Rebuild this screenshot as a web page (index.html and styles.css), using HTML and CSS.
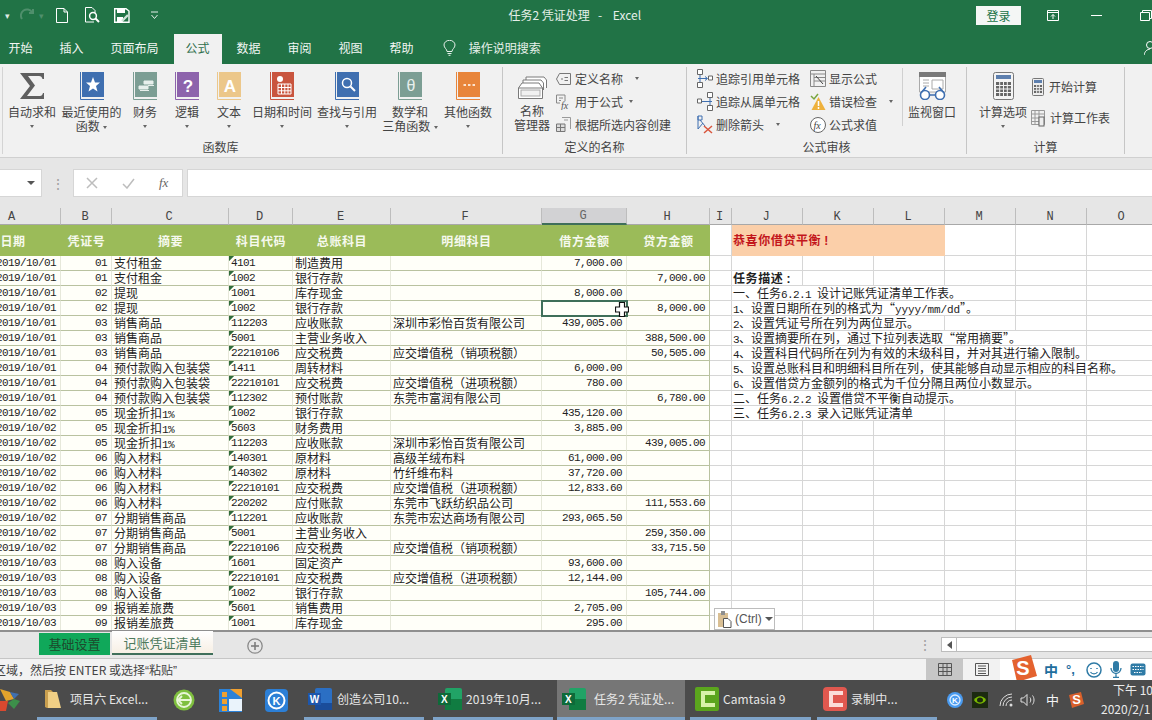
FILE: index.html
```html
<!DOCTYPE html>
<html lang="zh">
<head>
<meta charset="utf-8">
<title>任务2 凭证处理 - Excel</title>
<link rel="stylesheet" href="styles.css">
</head>
<body>
<div class="app">
<header class="titlebar">
  <div class="qat">
    <span class="caret-w first">▾</span>
    <svg class="q redo" width="16" height="14" viewBox="0 0 16 14"><path d="M2 11A6 6 0 0 1 12 4M13 1V5H9" fill="none" stroke="#4f8f6c" stroke-width="2"/></svg>
    <span class="caret-w dim">▾</span>
    <svg class="q doc" width="12" height="15" viewBox="0 0 12 15"><path d="M.5.5H8L11.5 4V14.5H.5Z M8 .5V4H11.5" fill="none" stroke="#fff"/></svg>
    <svg class="q prev" width="15" height="16" viewBox="0 0 15 16"><path d="M.5.5H7L10 3.5V6M.5.5V15H9" fill="none" stroke="#fff"/><circle cx="8" cy="9" r="3.4" fill="none" stroke="#fff" stroke-width="1.5"/><path d="M10.5 11.5L14 15" stroke="#fff" stroke-width="2"/></svg>
    <svg class="q save" width="16" height="15" viewBox="0 0 16 15"><path d="M.7.7H12L15 3V14.3H.7Z" fill="none" stroke="#fff" stroke-width="1.4"/><rect x="3" y="1" width="8" height="4" fill="#fff"/><rect x="3" y="9" width="6" height="5" fill="#fff"/><path d="M8 13L14 7" stroke="#cfe3d8" stroke-width="2.4"/></svg>
    <svg class="q more" width="9" height="9" viewBox="0 0 9 9"><path d="M1 1H8M1.5 4L4.5 7.5L7.5 4" fill="none" stroke="#e5efe9"/></svg>
  </div>
  <div class="doc-title">任务2&nbsp;凭证处理&nbsp;&nbsp; - &nbsp;&nbsp;&nbsp;Excel</div>
  <button class="login">登录</button>
  <svg class="win w1" width="12" height="11" viewBox="0 0 12 11"><path d="M.5.5H11.5V10.5H.5ZM.5 2.5H11.5M6 9V4.5M4 6.5L6 4.5L8 6.5" fill="none" stroke="#fff"/></svg>
  <span class="win-min"></span>
  <svg class="win w3" width="12" height="11" viewBox="0 0 12 11"><path d="M.5 2.5H9.5V10.5H.5ZM2.500 2.500V.5H11.500V8.500H9.500" fill="none" stroke="#fff"/></svg>
</header>

<nav class="tabs">
  <span class="tab">开始</span><span class="tab">插入</span><span class="tab">页面布局</span><span class="tab on">公式</span><span class="tab">数据</span><span class="tab">审阅</span><span class="tab">视图</span><span class="tab">帮助</span>
  <svg class="bulb" width="13" height="16" viewBox="0 0 13 16"><path d="M4 11.5C4 9 1 8 1 5A5.5 4.7 0 0 1 12 5C12 8 9 9 9 11.5ZM4.5 13.5H8.5M5.5 15.3H7.5" fill="none" stroke="#e6f0ea"/></svg>
  <span class="search">操作说明搜索</span>
  <svg class="share" width="8" height="16" viewBox="0 0 8 16"><circle cx="6" cy="5" r="3.500" fill="none" stroke="#fff"/><path d="M0 15C1 11 3 9.500 6 9" fill="none" stroke="#fff"/></svg>
</nav>

<section class="ribbon">
  <div class="group g1">
    <div class="body">
      <div class="big w54"><svg class="ic" width="24" height="28" viewBox="0 0 24 28"><path d="M0 1H24V7H22.5C22 5 21 4 19 4H8L15 13.5L7 24H20C21.500 24 22.500 23 23 21H24V27H0L10 14Z" fill="#5f5f5f"/></svg><span class="lb">自动求和</span><i class="car"></i></div>
      <div class="big w62"><svg class="ic" width="24" height="28" viewBox="0 0 24 28"><path d="M.5 0V27.5H24" stroke="#3f6fb0" fill="none"/><rect x="2" width="22" height="25" fill="#3f6fb0"/><path d="M13 5L15 10.500L20 10.500L16 14L17.500 19.500L13 16.500L8.500 19.500L10 14L6 10.500L11 10.500Z" fill="#fff"/></svg><span class="lb">最近使用的</span><span class="lb">函数 <i class="car in"></i></span></div>
      <div class="big w42 l"><svg class="ic" width="24" height="28" viewBox="0 0 24 28"><path d="M.5 0V27.5H24" stroke="#7c9e94" fill="none"/><rect x="2" width="22" height="25" fill="#7c9e94"/><path d="M6 14H15V17H6ZM7 18.500H16M11 9H20V12H11ZM15 13.500H21" stroke="#e7efec" fill="#e7efec"/></svg><span class="lb">财务</span><i class="car"></i></div>
      <div class="big w42"><svg class="ic" width="24" height="28" viewBox="0 0 24 28"><path d="M.5 0V27.500H24" stroke="#8d63ac" fill="none"/><rect x="2" width="22" height="25" fill="#8d63ac"/><text x="13" y="20" class="gl" fill="#fff">?</text></svg><span class="lb">逻辑</span><i class="car"></i></div>
      <div class="big w42"><svg class="ic" width="24" height="28" viewBox="0 0 24 28"><path d="M.5 0V27.500H24" stroke="#ecc78a" fill="none"/><rect x="2" width="22" height="25" fill="#ecc78a"/><text x="13" y="20" class="gl" fill="#fff">A</text></svg><span class="lb">文本</span><i class="car"></i></div>
      <div class="big w64"><svg class="ic" width="24" height="28" viewBox="0 0 24 28"><path d="M.5 0V27.500H24" stroke="#c9553e" fill="none"/><rect x="2" width="22" height="25" fill="#c9553e"/><circle cx="10" cy="7" r="3" fill="#fff"/><path d="M8 12H21V22H8ZM8 15.500H21M8 18.800H21M11.500 12V22M14.800 12V22M18 12V22" fill="#c9553e" stroke="#fff"/></svg><span class="lb">日期和时间</span><i class="car"></i></div>
      <div class="big w66"><svg class="ic" width="24" height="28" viewBox="0 0 24 28"><path d="M.5 0V27.500H24" stroke="#3f6fb0" fill="none"/><rect x="2" width="22" height="25" fill="#3f6fb0"/><circle cx="12" cy="11" r="4.500" fill="none" stroke="#fff" stroke-width="1.500"/><path d="M15.500 14.500L20 19" stroke="#fff" stroke-width="2"/></svg><span class="lb">查找与引用</span><i class="car"></i></div>
      <div class="big w60"><svg class="ic" width="24" height="28" viewBox="0 0 24 28"><path d="M.5 0V27.500H24" stroke="#7c9e94" fill="none"/><rect x="2" width="22" height="25" fill="#7c9e94"/><text x="13" y="19" class="gl th" fill="#e7efec">θ</text></svg><span class="lb">数学和</span><span class="lb">三角函数 <i class="car in"></i></span></div>
      <div class="big w56"><svg class="ic" width="24" height="28" viewBox="0 0 24 28"><path d="M.5 0V27.500H24" stroke="#e8853a" fill="none"/><rect x="2" width="22" height="25" fill="#e8853a"/><path d="M7.500 13H10M12 13H14.500M16.500 13H19" stroke="#fbe3cf" stroke-width="2"/></svg><span class="lb">其他函数</span><i class="car"></i></div>
    </div>
    <div class="gt t1">函数库</div>
  </div>

  <div class="group g2">
    <div class="body">
      <div class="big name"><svg class="ic" width="29" height="23" viewBox="0 0 29 23"><path d="M8 4V1H26L28.500 4V12M5 7V4H23L25.500 7V14M.5 12L4 7H21L24.500 12V22.500H.5ZM.5 12H24.500" fill="#fff" stroke="#7a7a7a"/><rect x="3" y="14" width="19" height="6" fill="#f1f1f1" stroke="#aaa"/></svg><span class="lb">名称</span><span class="lb">管理器</span></div>
      <div class="col names">
        <div class="sm"><svg width="15" height="12" viewBox="0 0 15 12"><path d="M3.500.5H14.500V11.500H3.500L.5 6Z M5 6H7M8.500 4.500H12M8.500 7.500H12" fill="none" stroke="#777"/></svg><span>定义名称</span><i class="car gap12"></i></div>
        <div class="sm"><svg width="15" height="16" viewBox="0 0 15 16"><path d="M.5 1H9V7M.5 1V9H4M3 4H7M3 6.500H5" fill="none" stroke="#888"/><text x="5" y="15" class="fx" fill="#555">fx</text></svg><span>用于公式</span><i class="car gap4"></i></div>
        <div class="sm"><svg width="15" height="15" viewBox="0 0 15 15"><path d="M.5 7H9V14.500H.5Z M.5 10.500H9M4.500 7V14.500" fill="#ddd" stroke="#777"/><path d="M6 .5H14.500V12" fill="none" stroke="#999"/><path d="M8 3H12" stroke="#999"/></svg><span>根据所选内容创建</span></div>
      </div>
    </div>
    <div class="gt">定义的名称</div>
  </div>

  <div class="group g3">
    <div class="body">
      <div class="col audit1">
        <div class="sm"><svg width="16" height="19" viewBox="0 0 16 19"><path d="M.5.5H5.500V5.500H.5ZM.5 13.500H5.500V18.500H.5ZM11.500 7H15.500V11H11.500Z" fill="#fff" stroke="#666"/><path d="M3 6V13M1 9.500H10M8 7.500L10.500 9.500L8 11.500" fill="none" stroke="#3f6fb0"/></svg><span>追踪引用单元格</span></div>
        <div class="sm"><svg width="16" height="19" viewBox="0 0 16 19"><path d="M10.500.5H15.500V5.500H10.500ZM10.500 13.500H15.500V18.500H10.500ZM.5 7H4.500V11H.5Z" fill="#fff" stroke="#666"/><path d="M13 6V13M5 9.500H15" fill="none" stroke="#3f6fb0"/></svg><span>追踪从属单元格</span></div>
        <div class="sm"><svg width="16" height="19" viewBox="0 0 16 19"><path d="M1 1V14M1 1H5V5H1ZM3 5L8 11M1 14L6 8" fill="none" stroke="#3f6fb0"/><path d="M7 11L15 18M15 11L7 18" stroke="#d9553c" stroke-width="1.500"/></svg><span>删除箭头</span><i class="car gap12"></i></div>
      </div>
      <div class="col audit2">
        <div class="sm"><svg width="16" height="17" viewBox="0 0 16 17"><path d="M.5.5H15.500V16.500H.5ZM.5 4H15.500M4 4V16.500M4 7.500H15.500M4 11H15.500" fill="none" stroke="#888"/><path d="M6 6L13 14" stroke="#444"/></svg><span>显示公式</span></div>
        <div class="sm"><svg width="16" height="18" viewBox="0 0 16 18"><path d="M1 3L4 6L8 1" fill="none" stroke="#7aa63f" stroke-width="1.500"/><path d="M8.500 4L15.500 17H1.500Z" fill="#eeb13c"/><path d="M8.500 8V13M8.500 14V16" stroke="#fff" stroke-width="1.500"/></svg><span>错误检查</span><i class="car gap12"></i></div>
        <div class="sm"><svg width="16" height="16" viewBox="0 0 16 16"><circle cx="8" cy="8" r="7.500" fill="#fff" stroke="#666"/><text x="3.500" y="11.500" class="fx" fill="#444">fx</text></svg><span>公式求值</span></div>
      </div>
      <div class="vsep"></div>
      <div class="big watch"><svg class="ic" width="29" height="28" viewBox="0 0 29 28"><path d="M1.500 1H27.500V20H1.500Z" fill="#fff" stroke="#aaa"/><rect x="1" y="0" width="27" height="5" fill="#7a7a7a"/><path d="M5 8H11M5 11H11M5 14H11M14 8H25V17H14Z" fill="none" stroke="#aaa"/><circle cx="7" cy="23" r="4.500" fill="#fff" stroke="#3f6fb0" stroke-width="1.600"/><circle cx="22" cy="23" r="4.500" fill="#fff" stroke="#3f6fb0" stroke-width="1.600"/><path d="M11 23H18M3 21L8 15M26 21L21 15" stroke="#3f6fb0" stroke-width="1.600" fill="none"/></svg><span class="lb">监视窗口</span></div>
    </div>
    <div class="gt">公式审核</div>
  </div>

  <div class="group g4">
    <div class="body">
      <div class="big calc"><svg class="ic" width="21" height="28" viewBox="0 0 21 28"><rect x=".5" y=".5" width="20" height="27" rx="2" fill="#f4f4f4" stroke="#777"/><rect x="3" y="3" width="15" height="4" fill="#5d7fae"/><path d="M3 10H18V24H3Z" fill="#666"/><path d="M3 13.500H18M3 17H18M3 20.500H18M6.700 10V24M10.500 10V24M14.300 10V24" stroke="#f4f4f4"/></svg><span class="lb">计算选项</span><i class="car"></i></div>
      <div class="col calcs">
        <div class="sm"><svg width="12" height="18" viewBox="0 0 12 18"><rect x=".5" y=".5" width="11" height="17" rx="1" fill="#eee" stroke="#777"/><rect x="2" y="2" width="8" height="3" fill="#5d7fae"/><path d="M2 7H10V15H2Z" fill="#666"/><path d="M2 9.500H10M2 12.300H10M4.700 7V15M7.300 7V15" stroke="#eee"/></svg><span>开始计算</span></div>
        <div class="sm"><svg width="14" height="18" viewBox="0 0 14 18"><path d="M.5 1.500H13.500V15.500H.5ZM.5 5H13.500M.5 9H13.500M.5 12.500H13.500M4 1.500V15.500M8 1.500V15.500" fill="none" stroke="#999"/><rect x="8" y="8" width="5" height="9" fill="#eee" stroke="#666"/></svg><span>计算工作表</span></div>
      </div>
    </div>
    <div class="gt">计算</div>
  </div>
</section>

<div class="gap-strip"></div>
<div class="fbar">
  <div class="namebox"><i class="car dark"></i></div>
  <span class="dots">⋮</span>
  <div class="fbtns">
    <svg class="x" width="12" height="12" viewBox="0 0 12 12"><path d="M1 1L11 11M11 1L1 11" stroke="#bdbdbd" stroke-width="1.500"/></svg>
    <svg class="v" width="13" height="11" viewBox="0 0 13 11"><path d="M1 6L5 10L12 1" fill="none" stroke="#bdbdbd" stroke-width="1.500"/></svg>
    <span class="fxb">fx</span>
  </div>
  <div class="finput"></div>
</div>
<div class="gap-strip"></div>

<main class="sheet">
<table class="grid">
<colgroup><col class="ca"><col class="cb"><col class="cc"><col class="cd"><col class="ce"><col class="cf"><col class="cg"><col class="ch"><col class="ci"><col class="cj"><col class="cj"><col class="cj"><col class="cj"><col class="cj"><col class="cj"></colgroup>
<thead>
<tr class="letters"><th>A</th><th>B</th><th>C</th><th>D</th><th>E</th><th>F</th><th class="sel">G</th><th>H</th><th>I</th><th>J</th><th>K</th><th>L</th><th>M</th><th>N</th><th>O</th></tr>
</thead>
<tbody>
<tr class="head"><td>日期</td><td>凭证号</td><td>摘要</td><td>科目代码</td><td>总账科目</td><td>明细科目</td><td>借方金额</td><td>贷方金额</td><td></td><td colspan="3" class="congrats">恭喜你借贷平衡<span class="bang">!</span></td><td></td><td></td><td></td></tr>
<tr><td>2019/10/01</td><td>01</td><td>支付租金</td><td>4101</td><td>制造费用</td><td></td><td>7,000.00</td><td></td><td></td><td></td><td></td><td></td><td></td><td></td><td></td></tr>
<tr><td>2019/10/01</td><td>01</td><td>支付租金</td><td>1002</td><td>银行存款</td><td></td><td></td><td>7,000.00</td><td></td><td class="b">任务描述<span class="bang">:</span></td><td></td><td></td><td></td><td></td><td></td></tr>
<tr><td>2019/10/01</td><td>02</td><td>提现</td><td>1001</td><td>库存现金</td><td></td><td>8,000.00</td><td></td><td></td><td colspan="4">一、任务<span class="n">6.2.1&nbsp;</span>设计记账凭证清单工作表。</td><td></td><td></td></tr>
<tr><td>2019/10/01</td><td>02</td><td>提现</td><td>1002</td><td>银行存款</td><td></td><td class="selected"></td><td>8,000.00</td><td></td><td colspan="4"><span class="n">1</span>、设置日期所在列的格式为“<span class="n wide">yyyy/mm/dd</span>”。</td><td></td><td></td></tr>
<tr><td>2019/10/01</td><td>03</td><td>销售商品</td><td>112203</td><td>应收账款</td><td>深圳市彩怡百货有限公司</td><td>439,005.00</td><td></td><td></td><td colspan="3"><span class="n">2</span>、设置凭证号所在列为两位显示。</td><td></td><td></td><td></td></tr>
<tr><td>2019/10/01</td><td>03</td><td>销售商品</td><td>5001</td><td>主营业务收入</td><td></td><td></td><td>388,500.00</td><td></td><td colspan="5"><span class="n">3</span>、设置摘要所在列，通过下拉列表选取“常用摘要”。</td><td></td></tr>
<tr><td>2019/10/01</td><td>03</td><td>销售商品</td><td>22210106</td><td>应交税费</td><td>应交增值税（销项税额）</td><td></td><td>50,505.00</td><td></td><td colspan="5"><span class="n">4</span>、设置科目代码所在列为有效的末级科目，并对其进行输入限制。</td><td></td></tr>
<tr><td>2019/10/01</td><td>04</td><td>预付款购入包装袋</td><td>1411</td><td>周转材料</td><td></td><td>6,000.00</td><td></td><td></td><td colspan="6"><span class="n">5</span>、设置总账科目和明细科目所在列，使其能够自动显示相应的科目名称。</td></tr>
<tr><td>2019/10/01</td><td>04</td><td>预付款购入包装袋</td><td>22210101</td><td>应交税费</td><td>应交增值税（进项税额）</td><td>780.00</td><td></td><td></td><td colspan="5"><span class="n">6</span>、设置借贷方金额列的格式为千位分隔且两位小数显示。</td><td></td></tr>
<tr><td>2019/10/01</td><td>04</td><td>预付款购入包装袋</td><td>112302</td><td>预付账款</td><td>东莞市富润有限公司</td><td></td><td>6,780.00</td><td></td><td colspan="4">二、任务<span class="n">6.2.2&nbsp;</span>设置借贷不平衡自动提示。</td><td></td><td></td></tr>
<tr><td>2019/10/02</td><td>05</td><td>现金折扣<span class="n">1%</span></td><td>1002</td><td>银行存款</td><td></td><td>435,120.00</td><td></td><td></td><td colspan="3">三、任务<span class="n">6.2.3&nbsp;</span>录入记账凭证清单</td><td></td><td></td><td></td></tr>
<tr><td>2019/10/02</td><td>05</td><td>现金折扣<span class="n">1%</span></td><td>5603</td><td>财务费用</td><td></td><td>3,885.00</td><td></td><td></td><td></td><td></td><td></td><td></td><td></td><td></td></tr>
<tr><td>2019/10/02</td><td>05</td><td>现金折扣<span class="n">1%</span></td><td>112203</td><td>应收账款</td><td>深圳市彩怡百货有限公司</td><td></td><td>439,005.00</td><td></td><td></td><td></td><td></td><td></td><td></td><td></td></tr>
<tr><td>2019/10/02</td><td>06</td><td>购入材料</td><td>140301</td><td>原材料</td><td>高级羊绒布料</td><td>61,000.00</td><td></td><td></td><td></td><td></td><td></td><td></td><td></td><td></td></tr>
<tr><td>2019/10/02</td><td>06</td><td>购入材料</td><td>140302</td><td>原材料</td><td>竹纤维布料</td><td>37,720.00</td><td></td><td></td><td></td><td></td><td></td><td></td><td></td><td></td></tr>
<tr><td>2019/10/02</td><td>06</td><td>购入材料</td><td>22210101</td><td>应交税费</td><td>应交增值税（进项税额）</td><td>12,833.60</td><td></td><td></td><td></td><td></td><td></td><td></td><td></td><td></td></tr>
<tr><td>2019/10/02</td><td>06</td><td>购入材料</td><td>220202</td><td>应付账款</td><td>东莞市飞跃纺织品公司</td><td></td><td>111,553.60</td><td></td><td></td><td></td><td></td><td></td><td></td><td></td></tr>
<tr><td>2019/10/02</td><td>07</td><td>分期销售商品</td><td>112201</td><td>应收账款</td><td>东莞市宏达商场有限公司</td><td>293,065.50</td><td></td><td></td><td></td><td></td><td></td><td></td><td></td><td></td></tr>
<tr><td>2019/10/02</td><td>07</td><td>分期销售商品</td><td>5001</td><td>主营业务收入</td><td></td><td></td><td>259,350.00</td><td></td><td></td><td></td><td></td><td></td><td></td><td></td></tr>
<tr><td>2019/10/02</td><td>07</td><td>分期销售商品</td><td>22210106</td><td>应交税费</td><td>应交增值税（销项税额）</td><td></td><td>33,715.50</td><td></td><td></td><td></td><td></td><td></td><td></td><td></td></tr>
<tr><td>2019/10/03</td><td>08</td><td>购入设备</td><td>1601</td><td>固定资产</td><td></td><td>93,600.00</td><td></td><td></td><td></td><td></td><td></td><td></td><td></td><td></td></tr>
<tr><td>2019/10/03</td><td>08</td><td>购入设备</td><td>22210101</td><td>应交税费</td><td>应交增值税（进项税额）</td><td>12,144.00</td><td></td><td></td><td></td><td></td><td></td><td></td><td></td><td></td></tr>
<tr><td>2019/10/03</td><td>08</td><td>购入设备</td><td>1002</td><td>银行存款</td><td></td><td></td><td>105,744.00</td><td></td><td></td><td></td><td></td><td></td><td></td><td></td></tr>
<tr><td>2019/10/03</td><td>09</td><td>报销差旅费</td><td>5601</td><td>销售费用</td><td></td><td>2,705.00</td><td></td><td></td><td></td><td></td><td></td><td></td><td></td><td></td></tr>
<tr><td>2019/10/03</td><td>09</td><td>报销差旅费</td><td>1001</td><td>库存现金</td><td></td><td>295.00</td><td></td><td></td><td></td><td></td><td></td><td></td><td></td><td></td></tr>
<tr><td></td><td></td><td></td><td></td><td></td><td></td><td></td><td></td><td></td><td></td><td></td><td></td><td></td><td></td><td></td></tr>
</tbody>
</table>
<svg class="cursor" width="14" height="15" viewBox="0 0 14 15"><path d="M4.500.5H9.500V5H13.500V10H9.500V14.500H4.500V10H.5V5H4.500Z" fill="#fff" stroke="#111" stroke-width="1.200"/></svg>
<div class="paste"><svg width="14" height="17" viewBox="0 0 14 17"><rect x="0" y="2" width="10" height="14" fill="#d9bf94"/><rect x="3" y="0" width="4" height="4" fill="#8f8f8f"/><path d="M5.500 7.500H10L13 10.500V16.500H5.500Z" fill="#fff" stroke="#555"/></svg><span>(Ctrl)</span><i class="car dark"></i></div>
</main>

<div class="sheetbar">
  <div class="stab green">基础设置</div>
  <div class="stab active">记账凭证清单</div>
  <svg class="plus" width="16" height="16" viewBox="0 0 16 16"><circle cx="8" cy="8" r="7.200" fill="none" stroke="#8a8a8a" stroke-width="1.300"/><path d="M8 4V12M4 8H12" stroke="#777" stroke-width="1.500"/></svg>
  <span class="dots sdots">⋮</span>
  <div class="scroll"><span class="sl"><i></i></span><span class="track"></span></div>
</div>

<footer class="status">
  <span class="msg">区域，然后按 ENTER 或选择<span class="lq">“</span>粘贴<span class="lq">”</span></span>
  <div class="view on"><svg width="14" height="13" viewBox="0 0 14 13"><path d="M.5.500H13.500V12.500H.5ZM.5 4.500H13.500M.5 8.500H13.500M5 .5V12.500M9 .5V12.500" fill="none" stroke="#555"/></svg></div>
  <div class="view"><svg width="14" height="13" viewBox="0 0 14 13"><path d="M.5.500H13.500V12.500H.5ZM3 3H11M3 5.500H11M3 8H11M3 10.500H11" fill="none" stroke="#555"/></svg></div>
  <div class="ime">
    <svg class="slogo" width="28" height="27" viewBox="0 0 28 27"><path d="M3 5L22 0L28 21L8 27Z" fill="#e4622f"/><text x="14" y="20" class="sg" fill="#fff">S</text></svg>
    <span class="zh">中</span><span class="pt">°,</span>
    <svg width="16" height="16" viewBox="0 0 16 16"><circle cx="8" cy="8" r="7" fill="none" stroke="#2f7ba6" stroke-width="1.500"/><path d="M5 6V7M11 6V7" stroke="#2f7ba6" stroke-width="1.500"/><path d="M4.500 10C6 12.500 10 12.500 11.500 10" fill="none" stroke="#2f7ba6" stroke-width="1.200"/></svg>
    <svg width="12" height="17" viewBox="0 0 12 17"><rect x="3" y="0" width="6" height="11" rx="3" fill="#2f7ba6"/><path d="M1 7A5 5.500 0 0 0 11 7M6 13V16M3 16.300H9" fill="none" stroke="#2f7ba6" stroke-width="1.300"/></svg>
    <svg width="16" height="13" viewBox="0 0 16 13"><rect x=".5" y=".5" width="15" height="12" rx="2" fill="#2f7ba6"/><path d="M2.500 3.500H13.500M2.500 6.500H13.500M4 9.500H12" stroke="#fff" stroke-dasharray="1.500 1"/></svg>
  </div>
</footer>

<div class="taskbar">
  <svg class="t-start" width="20" height="22" viewBox="0 0 20 22"><path d="M0 0L10 3L14 10L6 12Z" fill="#e2a32c"/><path d="M14 10L20 12L14 20L8 14Z" fill="#3d8f4a"/><path d="M0 12H8L6 22H0Z" fill="#d9492f"/><path d="M10 3L19 5L14 10Z" fill="#3f6fb0"/></svg>
  <div class="item explorer"><svg width="16" height="20" viewBox="0 0 16 20"><path d="M0 1H6L8 3V19H2L0 18Z" fill="#c99f4f"/><path d="M3 3H12L16 19H3Z" fill="#f0cf85"/></svg><span>项目六 Excel...</span></div>
  <div class="pin p1"><svg width="22" height="22" viewBox="0 0 22 22"><circle cx="11" cy="11" r="10.500" fill="#7fbf3f"/><circle cx="11" cy="11" r="7" fill="none" stroke="#e9f6d8" stroke-width="1.800"/><path d="M4 11H18M9 7L5 11L9 15" fill="none" stroke="#e9f6d8" stroke-width="1.800"/></svg></div>
  <div class="pin p2"><svg width="23" height="23" viewBox="0 0 23 23"><rect width="23" height="23" fill="#2c82d8"/><path d="M11 0L23 0V9ZM3 3H8V8H3ZM3 10H8V15H3ZM3 17H8V22H3Z" fill="#f0a030"/><rect x="10" y="10" width="13" height="12" fill="#eaf3fb"/></svg></div>
  <div class="pin p3"><svg width="23" height="23" viewBox="0 0 23 23"><rect width="23" height="23" rx="4" fill="#2c7fd6"/><circle cx="11.500" cy="11.500" r="8" fill="none" stroke="#fff" stroke-width="2"/><text x="11.500" y="15.500" class="kk" fill="#fff">K</text></svg></div>
  <div class="item word"><svg width="24" height="22" viewBox="0 0 24 22"><rect x="7" y="0" width="17" height="22" rx="2" fill="#2b6fc4"/><rect x="7" y="15" width="17" height="7" fill="#1a4d9a"/><rect x="0" y="5" width="13" height="12" fill="#1d56ac"/><text x="6.500" y="15" class="tx" fill="#fff">W</text></svg><span>创造公司10...</span></div>
  <div class="item excel"><svg width="24" height="22" viewBox="0 0 24 22"><rect x="7" y="0" width="17" height="22" rx="2" fill="#21a366"/><rect x="7" y="11" width="17" height="11" fill="#107c41"/><rect x="0" y="5" width="13" height="12" fill="#0e6a39"/><text x="6.500" y="15" class="tx" fill="#fff">X</text></svg><span>2019年10月...</span></div>
  <div class="item excel act"><svg width="24" height="22" viewBox="0 0 24 22"><rect x="7" y="0" width="17" height="22" rx="2" fill="#21a366"/><rect x="7" y="11" width="17" height="11" fill="#107c41"/><rect x="0" y="5" width="13" height="12" fill="#0e6a39"/><text x="6.500" y="15" class="tx" fill="#fff">X</text></svg><span>任务2 凭证处...</span></div>
  <div class="item cam"><svg width="24" height="24" viewBox="0 0 24 24"><rect width="24" height="24" rx="2" fill="#5ba51d"/><path d="M20 6H8V18H20" fill="none" stroke="#d7f2a8" stroke-width="4"/></svg><span>Camtasia 9</span></div>
  <div class="item rec"><svg width="24" height="24" viewBox="0 0 24 24"><rect width="24" height="24" rx="4" fill="#e0584f"/><path d="M20 6H8V18H20" fill="none" stroke="#fbdcd8" stroke-width="4"/></svg><span>录制中...</span></div>
  <div class="tray">
    <svg width="16" height="16" viewBox="0 0 16 16"><circle cx="8" cy="8" r="8" fill="#4a9bf0"/><circle cx="8" cy="8" r="5" fill="none" stroke="#dcecff" stroke-width="1.300"/><text x="8" y="11" class="kks" fill="#fff">K</text></svg>
    <svg class="nv" width="16" height="16" viewBox="0 0 16 16"><rect width="16" height="16" fill="#1c2a10"/><path d="M2 8C5 3 11 3 14 8C11 13 5 13 2 8Z" fill="#7ab800"/><ellipse cx="8" cy="8" rx="3" ry="2.500" fill="#1c2a10"/></svg>
    <svg class="wf" width="14" height="14" viewBox="0 0 14 14"><path d="M1 13A12 12 0 0 1 13 1M4 13A9 9 0 0 1 13 4M7 13A6 6 0 0 1 13 7" fill="none" stroke="#dcdcdc"/><circle cx="12" cy="12" r="1.500" fill="#dcdcdc"/></svg>
    <svg class="sp" width="16" height="14" viewBox="0 0 16 14"><path d="M1 5H3.500L7 1.500V12.500L3.500 9H1Z M10 4.500C11 6 11 8 10 9.500M12.500 2.500C14.500 5 14.500 9 12.500 11.500" fill="none" stroke="#e2e2e2"/></svg>
    <span class="tzh">中</span>
    <svg class="ts" width="16" height="16" viewBox="0 0 16 16"><path d="M1 3L13 0L16 12L4 16Z" fill="#d9602c"/><text x="8.500" y="12" class="sgs" fill="#fff">S</text></svg>
    <div class="clock"><span class="clk1">下午 10:</span><span class="clk2">2020/2/1</span></div>
  </div>
</div>
</div>
</body>
</html>
```
FILE: styles.css
```css
* { box-sizing: border-box; }
html, body { margin: 0; padding: 0; }
body { width: 1152px; height: 720px; overflow: hidden; font-family: "Noto Sans CJK SC", "Noto Sans", sans-serif; font-size: 12px; color: #444; }
svg { display: block; flex: none; }
i { font-style: normal; }
.app { width: 1152px; height: 720px; display: flex; flex-direction: column; overflow: hidden; background: #e6e6e6; }

/* title bar */
.titlebar { height: 32px; background: #217346; display: flex; align-items: center; padding-bottom: 2px; color: #fff; }
.qat { width: 509px; display: flex; align-items: center; }
.caret-w { font-size: 9px; color: #dfeae4; }
.caret-w.first { margin-left: 5px; }
.caret-w.dim { color: #4f8f6c; margin-left: 3px; }
.q.redo { margin-left: 10px; }
.q.doc { margin-left: 12px; }
.q.prev { margin-left: 17px; }
.q.save { margin-left: 14px; }
.q.more { margin-left: 20px; }
.doc-title { width: 468px; color: #e4efe9; font-size: 12px; line-height: 16px; white-space: nowrap; }
.login { width: 45px; height: 19px; border: 0; padding: 0; background: #f4f6f5; color: #217346; font: 12px/19px "Noto Sans CJK SC", sans-serif; }
.win.w1 { margin-left: 26px; }
.win-min { width: 11px; height: 1px; background: #fff; margin-left: 32px; }
.win.w3 { margin-left: 38px; }

/* tabs */
.tabs { height: 32px; background: #217346; display: flex; align-items: flex-end; color: #fff; }
.tab { height: 30px; line-height: 28px; padding: 0 13.500px; font-size: 12px; color: #f1f6f3; white-space: nowrap; }
.tab:first-child { margin-left: -5px; }
.tab.on { background: #f1f1f1; color: #2f6f4c; padding: 0 12px; margin: 0 1.500px; }
.bulb { margin: 0 0 8px 15.500px; }
.search { margin-left: 13px; height: 30px; line-height: 28px; color: #e6f0ea; }
.share { margin: 0 0 8px 603px; }

/* ribbon */
.ribbon { height: 94px; background: #f1f1f1; border-bottom: 1px solid #d0d0d0; display: flex; padding-top: 3px; }
.group { display: flex; flex-direction: column; border-right: 1px solid #c6c6c6; height: 87px; flex: none; }
.body { height: 71px; display: flex; }
.gt { height: 14px; line-height: 14px; margin-top: 2px; text-align: center; font-size: 12px; color: #444; }
.gt.t1 { padding-right: 66px; }
.g1 { width: 501px; margin-left: 2px; border-left: 1px solid #d4d4d4; padding-left: 2px; }
.g2 { width: 184px; }
.g3 { width: 280px; }
.g4 { width: 158px; }
.big { display: flex; flex-direction: column; align-items: center; padding-top: 5px; flex: none; }
.big .ic { height: 28px; margin-bottom: 5px; }
.lb { line-height: 14px; height: 14px; white-space: nowrap; color: #444; }
.w54 { width: 54px; } .w62 { width: 63px; margin-left: 1px; } .w42 { width: 42px; } .w42.l { margin-left: 1px; } .w64 { width: 64px; } .w66 { width: 66px; } .w60 { width: 60px; } .w56 { width: 56px; }
.car { display: block; width: 0; height: 0; border: 2.500px solid transparent; border-top: 3px solid #666; border-bottom: 0; margin-top: 6px; }
.car.in { display: inline-block; margin: 0 0 2px 1px; }
.car.gap12 { margin: 0 0 0 12px; }
.car.gap4 { margin: 0 0 0 6px; }
.car.dark { margin: 0; border-top-color: #555; border-width: 4px 4px 0; }
.gl { font: bold 17px "Liberation Sans", sans-serif; text-anchor: middle; }
.gl.th { font: 16px "Liberation Sans", sans-serif; }
.fx { font: italic 10px "Liberation Serif", serif; }
.big.name { width: 40px; margin-left: 9px; padding-top: 9px; }
.big.name .ic { height: 23px; margin-bottom: 5px; }
.col { display: flex; flex-direction: column; flex: none; }
.sm { height: 23px; display: flex; align-items: center; white-space: nowrap; color: #444; flex: none; }
.sm svg { margin-right: 4px; }
.names { margin-left: 4px; }
.audit1 { margin-left: 10px; width: 113px; }
.audit1 .sm svg, .audit2 .sm svg { margin-right: 3px; }
.audit2 { width: 92px; }
.vsep { width: 1px; height: 58px; background: #d0d0d0; flex: none; margin-top: 1px; }
.big.watch { width: 58px; }
.big.calc { width: 60px; margin-left: 6px; }
.calcs { padding-top: 4px; margin-left: -1px; }
.calcs .sm { height: 31px; }
.calcs .sm:first-child svg { margin-right: 5px; }
.calcs .sm:last-child svg { margin-left: -1px; margin-right: 5px; }

/* formula bar */
.gap-strip { height: 11px; background: #e6e6e6; flex: none; }
.fbar { height: 28px; background: #e6e6e6; display: flex; align-items: stretch; flex: none; }
.namebox { width: 42px; background: #fff; border: 1px solid #d6d6d6; border-left: 0; display: flex; align-items: center; justify-content: flex-end; padding-right: 6px; }
.dots { color: #a0a0a0; font-size: 14px; line-height: 28px; width: 31px; text-align: center; }
.fbtns { width: 110px; background: #fff; border: 1px solid #d6d6d6; display: flex; align-items: center; }
.x { margin-left: 12px; }
.v { margin-left: 24px; }
.fxb { margin-left: 24px; font: italic 13px "Liberation Serif", serif; color: #666; }
.finput { flex: 1; margin-left: 4px; background: #fff; border: 1px solid #d6d6d6; border-right: 0; }

/* sheet */
.sheet { height: 422px; flex: none; overflow: hidden; position: relative; background: #fff; }
.grid { table-layout: fixed; border-collapse: separate; border-spacing: 0; width: 1193px; margin-left: -35px; }
.ca { width: 96px; } .cb { width: 51px; } .cc { width: 117px; } .cd { width: 64px; } .ce { width: 98px; } .cf { width: 151px; } .cg { width: 85px; } .ch { width: 83px; } .ci { width: 22px; } .cj { width: 71px; }
.letters th { height: 16px; padding: 1px 2px 0 0; background: #e6e6e6; font: 400 12px/14px "Liberation Mono", monospace; color: #444; border-right: 1px solid #bdbdbd; border-bottom: 1px solid #a8a8a8; }
.letters th.sel { background: #d2d2d4; border-bottom: 2px solid #3f6f5a; color: #666; }
.grid td { height: 15px; padding: 0 2px 1px; line-height: 13px; font-size: 12px; color: #222; white-space: nowrap; border-right: 1px solid #d6d6d6; border-bottom: 1px solid #d6d6d6; vertical-align: middle; overflow: visible; }
.grid td:nth-child(n+9) { padding-left: 1px; }
.grid td:nth-child(-n+8) { background-color: #fffff9; border-bottom-color: #b9c2a0; border-right-color: #e6e8da; }
.grid td:nth-child(8) { border-right-color: #b9c2a0; }
.grid td:nth-child(1), .grid td:nth-child(2), .grid td:nth-child(4), .grid td:nth-child(7), .grid td:nth-child(8) { font-family: "Liberation Mono", monospace; font-size: 11px; line-height: 14px; padding-bottom: 0; letter-spacing: -.6px; }
.grid td:nth-child(1), .grid td:nth-child(2), .grid td:nth-child(7), .grid td:nth-child(8) { text-align: right; padding-right: 4px; }
.grid td:nth-child(4) { background-image: linear-gradient(135deg, #2f6b3a 0, #2f6b3a 3.500px, transparent 3.600px); background-size: 6px 6px; background-repeat: no-repeat; background-position: 0 0; }
.grid tr.head td { height: 30px; background: #9bbb59; background-image: none; border: 0; text-align: center; font: bold 12px/30px "Noto Sans CJK SC", sans-serif; letter-spacing: .6px; color: #f6f9ee; padding: 0; }
.grid tr.head td:nth-child(n+9) { background: #fff; border-right: 1px solid #d6d6d6; border-bottom: 1px solid #d6d6d6; text-align: left; }
.grid tr.head td.congrats { background: #fbcfa9; color: #c3161c; border-color: #fbcfa9; padding-left: 1px; }
.bang { font-family: "Liberation Sans", sans-serif; font-weight: bold; line-height: 8px; margin-left: 3px; }
.grid td.b { font-weight: bold; letter-spacing: .6px; }
.grid td.selected { outline: 2px solid #3f6f5a; outline-offset: -1px; background: #fffff9; }
.n { font: 11px/8px "Liberation Mono", monospace; letter-spacing: -.6px; }
.n.wide { letter-spacing: -.1px; }
.cursor { position: absolute; left: 615px; top: 94px; }
.paste { position: absolute; left: 714px; top: 400px; width: 61px; height: 22px; background: #fff; border: 1px solid #bdbdbd; display: flex; align-items: center; padding-left: 3px; gap: 3px; color: #555; font: 12px "Liberation Sans", sans-serif; }

/* sheet tabs */
.sheetbar { height: 28px; flex: none; background: #e6e6e6; border-top: 2px solid #8f8f8f; display: flex; align-items: flex-start; }
.stab { white-space: nowrap; text-align: center; font-size: 13px; }
.stab.green { margin: 1px 0 0 39px; width: 71px; height: 22px; line-height: 21px; background: #10a85a; color: #1c4a2c; }
.stab.active { margin: -1px 0 0 2px; width: 101px; height: 24px; line-height: 23px; background: linear-gradient(#fff, #f7efe4); color: #4c7a5c; border-bottom: 2px solid #3f6f5a; }
.plus { margin: 6px 0 0 34px; }
.dots.sdots { margin-left: 654px; width: 16px; line-height: 24px; }
.scroll { margin: 5px 0 0 8px; flex: 1; height: 15px; display: flex; background: #fff; border: 1px solid #bdbdbd; border-right: 0; }
.sl { width: 15px; display: flex; align-items: center; justify-content: center; border-right: 1px solid #bdbdbd; }
.sl i { width: 0; height: 0; border: 4px solid transparent; border-right: 5px solid #555; border-left: 0; }
.track { flex: 1; }

/* status bar */
.status { height: 22px; flex: none; background: #f2f2f2; border-top: 1px solid #c6c6c6; display: flex; align-items: stretch; }
.msg { width: 926px; margin-left: -6px; margin-right: 6px; line-height: 21px; color: #444; white-space: nowrap; font-size: 12px; flex: none; }
.lq { font-family: "Liberation Sans", sans-serif; }
.view { width: 37px; display: flex; align-items: center; justify-content: center; flex: none; }
.view.on { background: #c6c6c6; }
.ime { display: flex; align-items: center; flex: 1; background: #fff; gap: 8px; padding-left: 9px; }
.slogo { margin: -2px -2px 0 0; }
.sg { font: bold 20px "Liberation Sans", sans-serif; text-anchor: middle; }
.zh { font: bold 14px "Noto Sans CJK SC", sans-serif; color: #1f6e9e; line-height: 20px; margin-left: 1px; }
.pt { font: bold 13px "Liberation Sans", sans-serif; color: #1f6e9e; width: 12px; }

/* taskbar */
.taskbar { height: 40px; flex: none; background: #4b4b4b; display: flex; align-items: stretch; }
.t-start { align-self: center; flex: none; }
.item { display: flex; align-items: center; gap: 5px; width: 120px; border-bottom: 3px solid #7ea3c8; color: #e6e6e6; font-size: 12px; letter-spacing: .1px; white-space: nowrap; overflow: hidden; flex: none; }
.item.explorer { margin-left: 17px; padding-left: 8px; gap: 9px; }
.pin { display: flex; align-items: center; justify-content: center; width: 46px; flex: none; }
.pin.p1 { margin-left: 4px; }
.item.word { margin-left: 5px; padding-left: 4px; }
.item.excel { margin-left: 9px; padding-left: 5px; gap: 4px; }
.item.excel.act { margin-left: 4px; width: 128px; background: #767676; gap: 8px; }
.item.cam { margin-left: 5px; padding-left: 5px; width: 121px; gap: 4px; }
.item.rec { margin-left: 6px; padding-left: 6px; gap: 4px; }
.tx { font: bold 10px "Liberation Sans", sans-serif; text-anchor: middle; }
.kk { font: bold 11px "Liberation Sans", sans-serif; text-anchor: middle; }
.kks { font: bold 8px "Liberation Sans", sans-serif; text-anchor: middle; }
.sgs { font: bold 13px "Liberation Sans", sans-serif; text-anchor: middle; }
.tray { display: flex; align-items: center; margin-left: 10px; color: #eee; flex: none; }
.nv { margin-left: 9px; }
.wf { margin-left: 11px; }
.sp { margin-left: 7px; }
.tzh { margin-left: 10px; font-size: 13px; line-height: 16px; color: #f4f4f4; }
.ts { margin-left: 9px; }
.clock { margin-left: 17px; width: 50px; height: 40px; display: flex; flex-direction: column; font-size: 12px; color: #eaeaea; white-space: nowrap; line-height: 16px; padding-top: 2px; }
.clk1 { margin-left: 12px; }
.clk2 { margin-top: 3px; }
```
